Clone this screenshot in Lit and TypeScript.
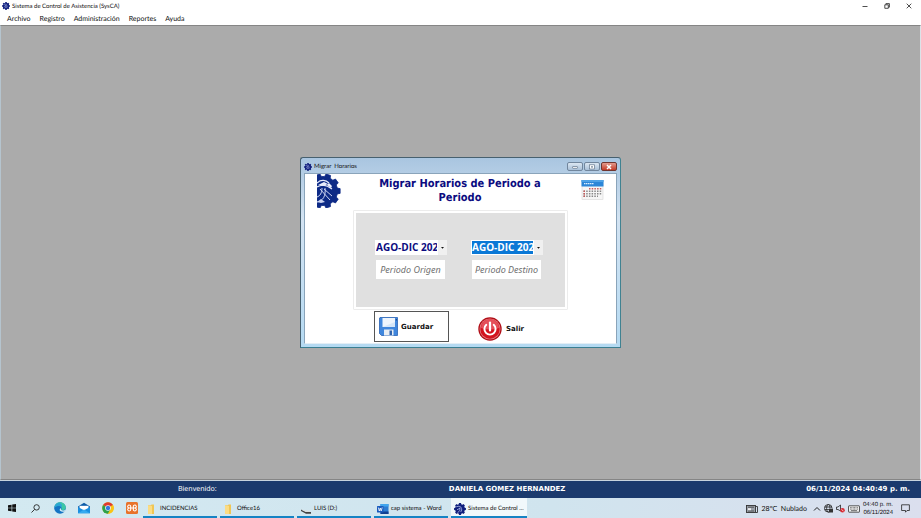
import { LitElement, html, css, svg } from "lit";
import { customElement, property } from "lit/decorators.js";

const gearPath = (cx: number, cy: number, outer: number, inner: number, teeth: number) => {
  const step = (Math.PI * 2) / teeth;
  const points: string[] = [];
  for (let i = 0; i < teeth; i++) {
    const a = i * step;
    for (const [offset, r] of [[-0.32, inner], [-0.22, outer], [0.22, outer], [0.32, inner]]) {
      const t = a + offset * step;
      points.push(`${(cx + Math.cos(t) * r).toFixed(2)} ${(cy + Math.sin(t) * r).toFixed(2)}`);
    }
  }
  return `M${points.join("L")}Z`;
};

const icons: Record<string, unknown> = {
  gear: svg`<svg viewBox="0 0 24 34">
    <path d="${gearPath(6, 17, 17.3, 14.6, 10)}" fill="#0d2a86" stroke="#0d2a86" stroke-width=".8" stroke-linejoin="round"/>
    <path d="M0 9C4 5 9 6 12 9M0 13C5 10 10 11 15 15" fill="none" stroke="#e8ecfb" stroke-width="1.2"/>
    <path d="M1 11L7 8L11 10L6 12ZM12 9L15 12L14 14L10 11Z" fill="#e8ecfb"/>
    <path d="M0 28C6 27 9 22 8 14M0 23C3 22 5 19 5 14M3 15L13 26M7 15L15 22" fill="none" stroke="#ccd4f2" stroke-width="1"/>
    <path d="M0 28L4 25L8 28L4 29Z" fill="#ccd4f2"/>
  </svg>`,
  mini: svg`<svg viewBox="0 0 16 16">
    <path d="${gearPath(8, 8, 8, 6.6, 8)}" fill="#12207e"/>
    <path d="M3 5Q7 3 10 6M5 13Q9 10 8 6M4 9L8 7M9 12Q11 9 10 7" fill="none" stroke="#b9c4f0" stroke-width="1"/>
  </svg>`,
  calendar: svg`<svg viewBox="0 0 23 20">
    <rect x="1" width="21" height="19.5" fill="#f6f6f6" stroke="#cfcfcf" stroke-width=".5"/>
    <rect x=".5" width="22" height="6.5" fill="#2c86d8"/><rect x=".5" width="22" height="2" fill="#4fa2e6"/>
    <path d="M3 3.700H13" stroke="#d8edff" stroke-width="1.200" stroke-dasharray="1.400 .5"/>
    <path d="M8 8.700H21" stroke="#c65a5a" stroke-width="1.600" stroke-dasharray="1.500 1.200"/>
    <path d="M2.500 11.200H21M2.500 13.700H21M2.500 16.200H17" stroke="#888" stroke-width="1.500" stroke-dasharray="1.500 1.200"/>
    <path d="M2.500 11.200H4M2.500 13.700H4M2.500 16.200H4" stroke="#c65a5a" stroke-width="1.500"/>
  </svg>`,
  floppy: svg`<svg viewBox="0 0 19 19">
    <path d="M1 .5H18.5V18.5H2.5L.5 16.5V1Z" fill="#3f86dd" stroke="#2a62b4" stroke-width=".8"/>
    <rect x="3.5" y="1" width="12.5" height="9" fill="#eef5fd"/><path d="M3.5 10L16 5V10Z" fill="#d5e6f8"/>
    <rect x="5" y="12.5" width="9.500" height="6" fill="#e8edf3"/><rect x="10.5" y="13.500" width="2.500" height="4.500" fill="#2f63ad"/>
    <rect x="16.8" y="2" width="1" height="1.500" fill="#173f7c"/>
  </svg>`,
  power: svg`<svg viewBox="0 0 24 24">
    <circle cx="12" cy="12" r="11.700" fill="#b00d16"/><circle cx="12" cy="12" r="10.500" fill="#e2797e"/>
    <circle cx="12" cy="12" r="9.700" fill="#d3141f"/><path d="M3 11A9 9 0 0 1 21 11Q12 14 3 11Z" fill="#e5505a"/>
    <path d="M8.300 7.800A5.600 5.600 0 1 0 15.700 7.800" fill="none" stroke="#fff" stroke-width="1.900" stroke-linecap="round"/>
    <path d="M12 5.500V13.500" stroke="#fff" stroke-width="2.200" stroke-linecap="round"/>
  </svg>`,
  windows: svg`<svg viewBox="0 0 8 8"><path d="M0 1.200L3.600 .7V3.700H0ZM4.200 .6L8 0V3.700H4.200ZM0 4.300H3.600V7.300L0 6.800ZM4.200 4.300H8V8L4.200 7.400Z" fill="#111"/></svg>`,
  search: svg`<svg viewBox="0 0 9 9"><circle cx="5.600" cy="3.400" r="2.700" fill="none" stroke="#222" stroke-width=".9"/><path d="M3.600 5.400L.5 8.500" stroke="#222" stroke-width=".9"/></svg>`,
  edge: svg`<svg viewBox="0 0 12 12">
    <circle cx="6" cy="6" r="5.800" fill="#1474c4"/>
    <path d="M.3 5.500C1 2 3.300.2 6 .2C9.500.2 11.800 2.800 11.800 5.300C11.800 7.500 10.200 8.300 8.700 8.300C7.500 8.300 7 7.700 7.300 7.200C7.900 6.300 7.700 4 5 3.800C3 3.700 1.200 4.500.3 5.500Z" fill="#3cc7a5"/>
    <path d="M.3 5.500C1 2.500 3 .8 5.500 1C8 1.500 8.500 4 7.300 5.200C6.800 4.200 5.500 3.800 4.300 3.900C2.500 4 1 4.700.3 5.500Z" fill="#2aa6d4"/>
    <path d="M7.300 5.700C6.500 6.700 6.900 8.500 8.700 8.600C10 8.700 11 8.200 11.600 7.500L11 9.500Q8 10.500 6 8.700Q5 7 7.300 5.700Z" fill="#d9eef4"/>
  </svg>`,
  mail: svg`<svg viewBox="0 0 12 12"><path d="M0 4.500L6 .8L12 4.500V11H0Z" fill="#0d5ca8"/><path d="M1.500 3.800H10.500V8H1.500Z" fill="#fff"/><path d="M0 5L6 8.300L12 5V11.200H0Z" fill="#1a8fe0"/><path d="M0 11.200L6 7.500L12 11.200Z" fill="#35aaf0"/></svg>`,
  chrome: svg`<svg viewBox="0 0 12 12">
    <circle cx="6" cy="6" r="5.800" fill="#f9c416"/>
    <path d="M6 6L1 3.100A5.800 5.800 0 0 1 11 3.100Z" fill="#df3a2f"/>
    <path d="M6 6L1 3.100A5.800 5.800 0 0 0 6 11.800L8.500 7.500Z" fill="#2da14c"/>
    <path d="M6 3.200H11L8.500 7.500L6 11.800A5.800 5.800 0 0 0 11 3.100Z" fill="#f9c416"/>
    <circle cx="6" cy="6" r="2.800" fill="#fff"/><circle cx="6" cy="6" r="2.200" fill="#3478e0"/>
  </svg>`,
  xampp: svg`<svg viewBox="0 0 12 12"><rect width="12" height="12" rx="1.500" fill="#e8722a"/><path d="M4.700 6H3.600A1.500 1.500 0 1 1 4.700 4.400V7.600A1.500 1.500 0 1 1 3.600 6M7.300 6H8.400A1.500 1.500 0 1 0 7.300 4.400V7.600A1.500 1.500 0 1 0 8.400 6M4.700 6H7.300" fill="none" stroke="#fff" stroke-width="1.100"/></svg>`,
  folder: svg`<svg viewBox="0 0 12 12"><path d="M2 2.200H5L5.500 1.500H8V11H2Z" fill="#f0c654"/><path d="M2 2.200L6 3V11H2Z" fill="#fbdc84"/></svg>`,
  drive: svg`<svg viewBox="0 0 12 12"><path d="M1 6.500L6 9H11L11 10.800H6L1 8Z" fill="#444"/><path d="M1 6.500L6 9H11L8 7.800Z" fill="#ddd"/></svg>`,
  word: svg`<svg viewBox="0 0 12 12"><rect x="3.500" y="1" width="8" height="10" fill="#2b7cd3"/><rect x="3.500" y="1" width="8" height="2.500" fill="#41a5ee"/><rect x="3.500" y="8.500" width="8" height="2.500" fill="#103f91"/><rect y="3" width="6.500" height="6.500" rx=".5" fill="#185abd"/><path d="M1.300 4.500L2.300 8L3.250 5L4.200 8L5.200 4.500" fill="none" stroke="#fff" stroke-width=".8"/></svg>`,
  news: svg`<svg viewBox="0 0 12 10"><rect x=".5" y="1.500" width="9" height="7" fill="#9aa0a8" stroke="#333" stroke-width=".9"/><path d="M2 3.200H8M2 7H8" stroke="#333" stroke-width=".7"/><rect x="2" y="4.200" width="3" height="2" fill="#eee"/><path d="M9.500 2.500H11.500V8.500H9.500" fill="none" stroke="#333" stroke-width=".9"/></svg>`,
  up: svg`<svg viewBox="0 0 8 8"><path d="M1 5.500L4 2.500L7 5.500" fill="none" stroke="#222"/></svg>`,
  globe: svg`<svg viewBox="0 0 9 9"><g fill="none" stroke="#222" stroke-width=".8"><circle cx="4.300" cy="4.300" r="3.800"/><ellipse cx="4.300" cy="4.300" rx="1.700" ry="3.800"/><path d="M.5 3H8M.5 5.600H8"/></g><rect x="5" y="5" width="4" height="3.500" fill="#333"/></svg>`,
  volume: svg`<svg viewBox="0 0 9 9"><path d="M.5 3H2L4.500 1V7L2 5.500H.5Z" fill="none" stroke="#222" stroke-width=".8"/><circle cx="6.500" cy="6.300" r="2.300" fill="#d92c35"/><path d="M5.500 5.300L7.500 7.300" stroke="#fff" stroke-width=".7"/></svg>`,
  keyboard: svg`<svg viewBox="0 0 12 8"><rect x=".5" y=".8" width="11" height="6.400" rx=".5" fill="#eee" stroke="#333" stroke-width=".8"/><path d="M2 2.600H10M2 4.100H10" stroke="#444" stroke-width=".8" stroke-dasharray=".8 .6"/><path d="M3 5.700H9" stroke="#444" stroke-width=".8"/></svg>`,
  note: svg`<svg viewBox="0 0 9 9"><path d="M.6 .8H8.400V6.500H6L4.500 8.200V6.500H.6Z" fill="none" stroke="#222" stroke-width=".8"/></svg>`,
  minimize: svg`<svg viewBox="0 0 6 6"><path d="M.5 3.500H5.500" stroke="#222" stroke-width=".8"/></svg>`,
  restore: svg`<svg viewBox="0 0 6 6"><path d="M.8 1.800H4.300V5.300H.8ZM1.900 1.500V.6H5.400V4.200H4.500" fill="none" stroke="#222" stroke-width=".8"/></svg>`,
  close: svg`<svg viewBox="0 0 6 6"><path d="M.7 .7L5.300 5.300M5.300 .7L.7 5.300" stroke="#222" stroke-width=".8"/></svg>`,
  paneMin: svg`<svg viewBox="0 0 8 6"><rect x="1.500" y="2.500" width="5" height="1.800" rx=".5" fill="#fff" stroke="#62768c" stroke-width=".7"/></svg>`,
  paneMax: svg`<svg viewBox="0 0 8 6"><rect x="1.500" y=".8" width="5" height="4.200" fill="#fff" stroke="#62768c" stroke-width=".7"/><rect x="3.200" y="2.200" width="1.600" height="1.400" fill="#62768c"/></svg>`,
  paneClose: svg`<svg viewBox="0 0 8 6"><path d="M2 1L6 5M6 1L2 5" stroke="#fff" stroke-width="1.500"/></svg>`,
};

const base = css`
  * { box-sizing: border-box; }
  svg { display: block; width: 100%; height: 100%; }
  button { margin: 0; padding: 0; border: 0; background: none; font: inherit; color: inherit; display: flex; align-items: center; text-rendering: inherit; }
  .icon { display: block; flex: none; }
  .i6 { width: 6px; height: 6px; }
  .i8 { width: 8px; height: 8px; }
  .i9 { width: 9px; height: 9px; }
  .i12 { width: 12px; height: 12px; }
`;

@customElement("migrate-dialog")
export class MigrateDialog extends LitElement {
  static styles = [base, css`
    :host {
      display: block; box-sizing: border-box; width: 321px;
      border: 1px solid #47606f; border-radius: 3px 3px 0 0;
      border-right-color: #3f8291; border-bottom-color: #3b7f92;
      background: linear-gradient(#a9c5e0, #d3e3f2 60px, #b5daf2);
      padding: 0 3px 3px;
      font-family: Lato, sans-serif;
    }
    .caption { display: flex; align-items: center; gap: 2px; height: 15px; padding-top: 2px; font-size: 6px; color: #111; }
    .caption .name { flex: 1; }
    .panes { display: flex; gap: 1px; }
    .pane { width: 16px; height: 9px; justify-content: center; border: 1px solid #71869d; border-radius: 2px; background: linear-gradient(#dbe7f2, #a9c0d8); }
    .pane .icon { width: 8px; height: 6px; }
    .close { background: linear-gradient(#e39b8e, #c43a26); border-color: #70352f; }
    .body { border: 1px solid #8aa4ba; border-bottom-color: #e4eef6; background: #fff; padding: 0 12px 1px; }
    .head { display: flex; align-items: flex-start; height: 36px; }
    .logo { width: 24px; height: 34px; }
    .cal { width: 23px; height: 20px; margin-top: 6px; }
    h1 { flex: 1; margin: 3px 0 0; padding: 0 32px 0 30px; text-align: center; font: bold 11px/14px "DejaVu Sans Condensed", "DejaVu Sans", sans-serif; color: #0b0b80; }
    .group { margin: 0 36px; border: 1px solid #ececec; padding: 2px; border-radius: 1px; }
    .area { background: #e0e0e0; height: 94px; display: grid; grid-template-columns: 72px 72px; column-gap: 24px; row-gap: 5px; align-content: start; padding: 27px 0 0 19px; }
    .combo { display: flex; align-items: center; height: 15px; background: #fff; }
    select { appearance: none; flex: 1; min-width: 0; height: 13px; margin: 0 1px; padding: 0; border: 0; border-radius: 0; outline: 0; background: #fff; color: #0b0b80; font: bold 10px/13px "Open Sans", sans-serif; overflow: hidden; }
    select.selected { background: #0a78d6; color: #fff; }
    .arrow { width: 9px; height: 15px; background: #f0f0f0; }
    input { height: 19px; margin: 0 2px 0 1px; min-width: 0; border: 0; padding: 0; text-align: center; background: #fff; font: italic 9px/19px "Noto Sans", sans-serif; }
    input::placeholder { color: #707070; opacity: 1; }
    .actions { display: flex; gap: 25px; padding: 1px 0 0 57px; font: bold 7px/10px "DejaVu Sans", sans-serif; color: #111; text-rendering: geometricPrecision; }
    .save { width: 75px; height: 31px; border: 1px solid #555; padding-left: 4px; gap: 3px; }
    .save .icon { width: 19px; height: 19px; }
    .exit { height: 31px; padding: 4px 4px 0; gap: 4px; }
    .exit .icon { width: 24px; height: 24px; }
  `];

  render() {
    return html`
      <div class="caption">
        <span class="icon i8">${icons.mini}</span><span class="name">Migrar&nbsp; Horarios</span>
        <div class="panes">
          <button class="pane" aria-label="Minimizar"><span class="icon">${icons.paneMin}</span></button>
          <button class="pane" aria-label="Maximizar"><span class="icon">${icons.paneMax}</span></button>
          <button class="pane close" aria-label="Cerrar"><span class="icon">${icons.paneClose}</span></button>
        </div>
      </div>
      <div class="body">
        <div class="head">
          <span class="icon logo">${icons.gear}</span>
          <h1>Migrar Horarios de Periodo a Periodo</h1>
          <span class="icon cal">${icons.calendar}</span>
        </div>
        <div class="group"><div class="area">
          ${["Origen", "Destino"].map((n) => html`
            <div class="combo">
              <select class=${n === "Destino" ? "selected" : ""} aria-label="Periodo ${n}"><option>AGO-DIC 2024</option></select>
              <span class="icon arrow"><svg viewBox="0 0 9 15"><path d="M3 7H6L4.500 8.700Z" fill="#111"/></svg></span>
            </div>`)}
          ${["Origen", "Destino"].map((n) => html`<input type="text" aria-label="Periodo ${n}" placeholder="Periodo ${n}">`)}
        </div></div>
        <div class="actions">
          <button class="save"><span class="icon">${icons.floppy}</span>Guardar</button>
          <button class="exit"><span class="icon">${icons.power}</span>Salir</button>
        </div>
      </div>`;
  }
}

@customElement("task-bar")
export class TaskBar extends LitElement {
  static styles = [base, css`
    :host { display: flex; height: 20px; align-items: stretch; background: linear-gradient(90deg, #d3e9f1, #d0e4ee 60%, #dbdfee); font: 6px/8px Lato, sans-serif; color: #111; }
    .pins { display: flex; align-items: center; gap: 1px; }
    .pin { width: 23px; height: 20px; justify-content: center; }
    .tasks { display: flex; gap: 3px; flex: 1; }
    .task { width: 74px; height: 20px; gap: 2px; padding: 3px 3px 0; border-bottom: 2px solid #1583c4; white-space: nowrap; }
    .active { background: #f1f8fb; width: 76px; }
    .tray { display: flex; align-items: center; gap: 3px; padding: 1px 11px 0 0; }
    .weather { font-size: 7px; gap: 4px; margin-right: 3px; white-space: pre; }
    .kb { width: 12px; height: 8px; }
    .news { width: 12px; height: 10px; }
    .clock { text-align: right; margin-right: 5px; font-family: "Liberation Sans", sans-serif; }
  `];

  render() {
    const pins = [["Inicio", "windows", "i8"], ["Buscar", "search", "i9"], ["Edge", "edge", "i12"], ["Correo", "mail", "i12"], ["Chrome", "chrome", "i12"], ["XAMPP", "xampp", "i12"]];
    const tasks = [["INCIDENCIAS", "folder"], ["Office16", "folder"], ["LUIS (D:)", "drive"], ["cap sistema - Word", "word"], ["Sistema de Control ...", "mini"]];
    return html`
      <div class="pins">${pins.map(([n, i, s]) => html`<button class="pin" aria-label=${n}><span class="icon ${s}">${icons[i]}</span></button>`)}</div>
      <div class="tasks">${tasks.map(([n, i]) => html`<button class="task ${i === "mini" ? "active" : ""}"><span class="icon i12">${icons[i]}</span>${n}</button>`)}</div>
      <div class="tray">
        <button class="weather"><span class="icon news">${icons.news}</span>28°C  Nublado</button>
        <span class="icon i8">${icons.up}</span><span class="icon i9">${icons.globe}</span>
        <span class="icon i9">${icons.volume}</span><span class="icon kb">${icons.keyboard}</span>
        <div class="clock">04:40 p. m.<br>06/11/2024</div>
        <span class="icon i9">${icons.note}</span>
      </div>`;
  }
}

@customElement("app-root")
export class AppRoot extends LitElement {
  @property() user = "DANIELA GOMEZ HERNANDEZ";

  static styles = [base, css`
    :host { display: flex; flex-direction: column; height: 100vh; background: #fff; font-family: Lato, sans-serif; color: #111; overflow: hidden; text-rendering: geometricPrecision; }
    .title { display: flex; align-items: center; gap: 2px; height: 12px; padding: 0 9px 0 2px; font-size: 6px; }
    .title .name { flex: 1; }
    .controls { display: flex; gap: 16px; }
    nav { display: flex; gap: 9px; height: 13px; padding: 1px 0 0 7px; font-size: 7px; line-height: 12px; }
    .work { flex: 1; display: grid; place-items: center; background: #ababab; border: 1px solid #858585; border-left-color: #b5c4ce; border-right-color: #dce3e8; }
    .status { display: grid; grid-template-columns: 37% auto 1fr; align-items: center; height: 18px; padding: 0 11px 0 178px; background: #1b3a6d; color: #fff; border-top: 1px solid #c8d4de; font: 7px/17px "Noto Sans", sans-serif; }
    .status strong { font: bold 7px/17px "DejaVu Sans", sans-serif; }
    .status .now { text-align: right; }
  `];

  render() {
    return html`
      <header class="title">
        <span class="icon i8">${icons.mini}</span><span class="name">Sistema de Control de Asistencia (SysCA)</span>
        <div class="controls">
          <button aria-label="Minimizar"><span class="icon i6">${icons.minimize}</span></button>
          <button aria-label="Restaurar"><span class="icon i6">${icons.restore}</span></button>
          <button aria-label="Cerrar"><span class="icon i6">${icons.close}</span></button>
        </div>
      </header>
      <nav>${["Archivo", "Registro", "Administración", "Reportes", "Ayuda"].map((m) => html`<button>${m}</button>`)}</nav>
      <main class="work"><migrate-dialog></migrate-dialog></main>
      <footer class="status"><span>Bienvenido:</span><strong>${this.user}</strong><strong class="now">06/11/2024 04:40:49 p. m.</strong></footer>
      <task-bar></task-bar>`;
  }
}
